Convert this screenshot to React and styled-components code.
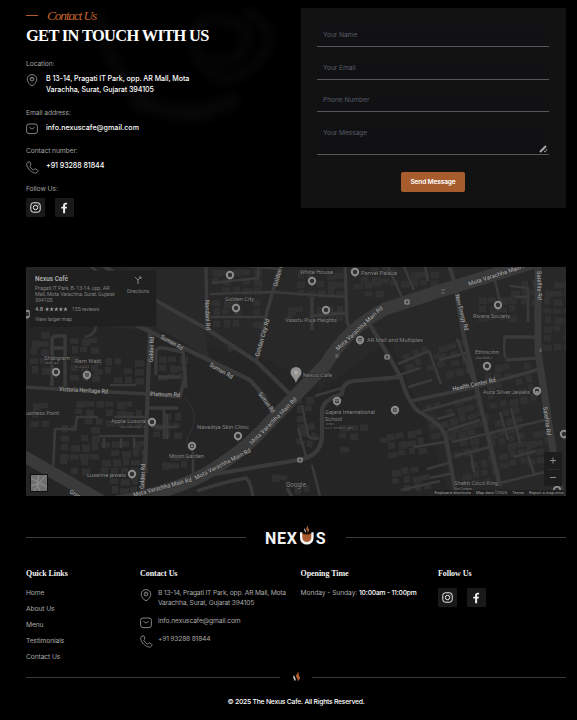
import React from "react";
import styled, { createGlobalStyle } from "styled-components";

const GlobalStyle = createGlobalStyle`
  * { box-sizing: border-box; }
  body { margin: 0; background: #000; overflow: hidden; }
  h1, h2, p, ul { margin: 0; padding: 0; font-weight: inherit; }
  ul { list-style: none; }
  a { color: inherit; text-decoration: none; }
`;

const Page = styled.div`
  position: relative;
  width: 577px;
  height: 720px;
  padding: 8px 11px 0 26px;
  overflow: hidden;
  background: #000;
  color: #fff;
  font-family: Inter, "Liberation Sans", sans-serif;
  font-size: 6.7px;
`;

const Smoke = styled.svg`
  position: absolute;
  left: 0;
  top: 0;
  width: 300px;
  height: 150px;
`;

const Hero = styled.section`
  position: relative;
  display: grid;
  grid-template-columns: 275px 265px;
  height: 259px;
`;

const Eyebrow = styled.div`
  display: flex;
  align-items: center;
  gap: 9px;
  height: 15px;
  color: #c0602a;
  font: italic 13.5px/15px "Liberation Serif", cursive;
  letter-spacing: -1.2px;

  &::before {
    content: "";
    width: 12px;
    height: 1px;
    background: #b9602a;
  }
`;

const Title = styled.h1`
  height: 24px;
  font: bold 16.4px/25px "Liberation Serif", serif;
  letter-spacing: -0.64px;
  white-space: nowrap;
`;

const Label = styled.p`
  height: 10px;
  margin-top: ${(p) => p.$top}px;
  color: #a2a2a2;
  line-height: 10px;
  letter-spacing: -0.08px;
`;

const Detail = styled.div`
  display: flex;
  gap: ${(p) => p.$gap}px;
  margin-top: ${(p) => p.$top}px;
  height: ${(p) => p.$height}px;
  line-height: ${(p) => p.$line}px;
  white-space: nowrap;

  svg { flex: none; margin-top: 1px; }
`;

const Strong = styled.span`
  font-size: 7.1px;
  font-weight: 500;
  letter-spacing: ${(p) => p.$track}px;
`;

const FooterText = styled.span`
  letter-spacing: ${(p) => p.$track}px;
`;

const Socials = styled.div`
  display: flex;
  gap: 10px;
  margin-top: ${(p) => p.$top}px;
`;

const SocialButton = styled.a`
  display: grid;
  place-items: center;
  width: 19px;
  height: 19px;
  border-radius: 1px;
  background: #191919;
`;

const Form = styled.form`
  display: flex;
  flex-direction: column;
  align-items: center;
  width: 265px;
  height: 200px;
  padding: 11px 17px 0 16px;
  background: #121212;
`;

const fieldFont = `
  display: block;
  width: 232px;
  margin: 0;
  border: 0;
  border-bottom: 1px solid #555759;
  outline: 0;
  background: #111113;
  color: #ddd;
  font: 6.7px/10px Inter, "Liberation Sans", sans-serif;
  letter-spacing: -0.08px;
  &::placeholder { color: #565c68; opacity: 1; }
`;

const Input = styled.input`
  ${fieldFont}
  height: 21px;
  padding: 0 6px 3px;
  margin-top: ${(p) => p.$top}px;
  flex: none;
`;

const MessageBox = styled.div`
  display: flex;
  align-items: flex-end;
  justify-content: flex-end;
  width: 232px;
  height: 32px;
  margin-top: 11px;
  border-bottom: 1px solid #555759;
  background: #111113;
`;

const TextArea = styled.textarea`
  ${fieldFont}
  flex: 1;
  height: 31px;
  padding: 5px 6px;
  border: 0;
  resize: none;
`;

const SendButton = styled.button`
  width: 64px;
  height: 20px;
  margin-top: 17px;
  padding: 0;
  border: 0;
  border-radius: 2px;
  background: #a65c2c;
  color: #fff;
  font: 600 6.7px/20px Inter, sans-serif;
  letter-spacing: -0.22px;
`;

const MapFrame = styled.section`
  position: relative;
  width: 540px;
  height: 229px;
  overflow: hidden;
  background: #252525;
  font-family: Roboto, sans-serif;
`;

const MapCanvas = styled.svg`
  display: block;
  width: 540px;
  height: 229px;
`;

const PlaceCard = styled.div`
  position: absolute;
  left: 4px;
  top: 4px;
  display: flex;
  justify-content: space-between;
  width: 126px;
  height: 55px;
  padding: 4px 7px 0 5px;
  background: #202020;
  box-shadow: 0 0 1px #111;
  color: #7f7f7f;
  font-size: 5.4px;
  line-height: 6.2px;
  letter-spacing: -0.12px;
  white-space: nowrap;
`;

const PlaceName = styled.div`
  margin-bottom: 2px;
  color: #a4a4a4;
  font-size: 6.4px;
  font-weight: 700;
  line-height: 8px;
  letter-spacing: 0;
`;

const Rating = styled.div`
  display: flex;
  align-items: center;
  gap: 2px;
  margin: 2.5px 0 4px;
  b { color: #9b9b9b; font-size: 5.8px; font-weight: 500; }
  span { margin-left: 2px; }
`;

const Directions = styled.div`
  display: flex;
  flex-direction: column;
  align-items: center;
  gap: 4px;
  padding-top: 1px;
  font-size: 5.2px;
`;

const ZoomControl = styled.div`
  position: absolute;
  right: 4px;
  bottom: 10px;
  width: 18px;
  height: 34px;
  background: #1d1d1d;
`;

const LayerThumb = styled.div`
  position: absolute;
  left: 4px;
  bottom: 4px;
  display: grid;
  width: 18px;
  height: 18px;
  border: 1px solid #111;
  background: #6f6f6f;
`;

const Attribution = styled.div`
  position: absolute;
  right: 2px;
  bottom: 0;
  display: flex;
  gap: 5px;
  height: 6px;
  color: #a0a0a0;
  font-size: 4.2px;
  line-height: 6px;
  white-space: nowrap;
  background: #202020;
`;

const Divider = styled.div`
  display: flex;
  align-items: center;
  justify-content: space-between;
  width: 540px;
  height: ${(p) => p.$height}px;
  margin-top: ${(p) => p.$top}px;

  &::before, &::after {
    content: "";
    width: ${(p) => p.$line}px;
    height: 1px;
    background: #3a3a3a;
  }
`;

const FooterGrid = styled.footer`
  display: grid;
  grid-template-columns: 114px 160.5px 137.5px 128px;
  height: 122px;
  padding-top: 17px;
  color: #a9a9a9;
  letter-spacing: -0.1px;
`;

const ColumnTitle = styled.h2`
  height: 12px;
  color: #f2f2f2;
  font: bold 8px/12px "Liberation Serif", serif;
  letter-spacing: -0.06px;
  white-space: nowrap;
`;

const LinkList = styled.ul`
  display: grid;
  grid-auto-rows: 16.1px;
  margin-top: 8px;
  line-height: 10px;
`;

const Hours = styled.p`
  margin-top: 8px;
  line-height: 10px;
  letter-spacing: -0.08px;
  white-space: nowrap;
  b { color: #fff; font-weight: 500; letter-spacing: -0.17px; }
`;

const Copyright = styled.p`
  margin-top: 13px;
  font-size: 6.8px;
  font-weight: 500;
  line-height: 10px;
  letter-spacing: -0.24px;
  text-align: center;
`;

const PinIcon = () => (
  <svg width="12" height="13" viewBox="0 0 12 13" fill="none" stroke="#929292" strokeWidth=".9">
    <path d="M4.6 11.1C2.6 9.1 1.2 7.2 1.2 5.2a4.8 4.6 0 0 1 9.6 0c0 2-1.4 3.9-3.4 5.9q-1.4 1.1-2.8 0Z" />
    <circle cx="6" cy="5" r="1.9" />
    <path d="M6 4v1.2" />
  </svg>
);

const MailIcon = () => (
  <svg width="12" height="12" viewBox="0 0 12 12" fill="none" stroke="#929292" strokeWidth=".9">
    <rect x=".6" y="1" width="10.8" height="9.6" rx="2.4" />
    <path d="M3.4 4.2 5.1 5.6q.9.6 1.8 0l1.7-1.4" />
  </svg>
);

const PhoneIcon = () => (
  <svg width="13" height="13" viewBox="0 0 13 13" fill="none" stroke="#929292" strokeWidth=".9" strokeLinejoin="round">
    <path d="M3.1.8 1.2 1.7C0 2.7.9 6.3 3.6 9s6.1 3.8 7.3 2.7l1-1.5c.2-.5 0-.9-.5-1.2L9.6 7.9c-.5-.2-.9-.1-1.2.4-.4.7-.8.8-1.4.5C5.9 8.1 4.8 7 4.1 5.9 3.7 5.2 3.9 4.900 4.500 4.500c.5-.3.5-.7.3-1.200L4.200 1.300C4 .8 3.600.6 3.100.8Z" />
  </svg>
);

const InstagramIcon = () => (
  <svg width="11" height="11" viewBox="0 0 11 11" fill="none" stroke="#eee" strokeWidth="1">
    <rect x=".8" y=".8" width="9.4" height="9.4" rx="2.5" />
    <circle cx="5.5" cy="5.5" r="2.2" />
    <circle cx="8.1" cy="2.9" r=".5" fill="#eee" stroke="none" />
  </svg>
);

const FacebookIcon = () => (
  <svg width="11" height="12" viewBox="0 0 11 12" fill="#eee">
    <path d="M4.1 11.3V6.6H2.3V4.700H4.100V3.500C4.100 1.600 5.100.7 6.700.7h1.400v1.800H7c-.7 0-.9.4-.9 1v1.200H8L7.700 6.600H6.100v4.700Z" />
  </svg>
);

const Flame = () => (
  <g>
    <path d="M4.900 0C5.800 2 2.700 3.100 3.400 5.300C3.800 6.600 5.200 7 4.700 9.600C6.900 7.900 7.500 6.200 6.300 4.600C5.100 3 6.300 1.500 4.900 0Z" fill="#b05e2e" />
    <path d="M1.500 4C-.5 5.800 1.800 7 2.100 9.400C4.200 7.500 1.700 6.200 1.500 4Z" fill="#ddd" />
  </g>
);

const LogoSvg = styled.svg`
  width: 62px;
  height: 26px;
  font: 700 16px Roboto, sans-serif;
`;

const Logo = () => (
  <LogoSvg viewBox="0 0 62 26" fill="#f4f4f4">
    <text x="0" y="18.500" textLength="32">NEX</text>
    <text x="50.700" y="18.500" textLength="10">S</text>
    <path d="M35 7.200V13a6.800 6.600 0 0 0 13.600 0V7.200Z" />
    <path d="M37.300 7V12.800a4.500 4.200 0 0 0 9 0V7Z" fill="#a95c2e" />
    <path d="M37.300 6.900H46.300V8.500Q41.800 10.500 37.300 8.500Z" fill="#1a0e07" />
    <g transform="translate(38.600 0) scale(.8)"><Flame /></g>
  </LogoSvg>
);

const SmallFlame = () => (
  <svg width="9" height="12" viewBox="0 0 9 12"><g transform="translate(.5 0) scale(1.080)"><Flame /></g></svg>
);

const WIDE_ROADS = [
  ["M100 505Q180 492 215 468Q245 450 267 425L326 364Q348 328 385 309L440 291L535 262", 13],
  ["M20 454L104 502", 12],
  ["M538 262V352L553 450L562 500", 7],
];

const ROADS = [
  ["M98 262L153 299L207 329L257 362L296 400", 5],
  ["M130 322L250 380L264 396L275 418", 5],
  ["M206 262L207 330", 4],
  ["M281 262L267 312L256 363", 4],
  ["M210 294L272 292L345 297M207 317H265M212 283L258 278V267M230 264L280 269", 3],
  ["M345 262L347 322L353 333M310 316L345 313M312 297V330", 4],
  ["M150 332L148 385L145 466L141 500", 5],
  ["M22 387L148 394L180 397L184 380", 4],
  ["M52 386V340Q52 336 57 336H65V387M53 348H66", 4],
  ["M156 375V352Q157 347 164 348L183 352L186 388M158 377H180M148 408H178", 4],
  ["M197 477L298 460Q323 456 322 432V410Q323 400 342 394Q342 382 354 381L400 377", 5],
  ["M302 405L308 435Q309 440 319 438M298 428L306 457M315 396L342 388", 3],
  ["M370 325L390 358L401 378Q408 402 418 411Q446 427 446 439L457 500", 5],
  ["M448 262L455 284L463 332L476 386L500 486", 5],
  ["M411 401L475 387L540 369M503 337H538M506 360L538 358", 4],
  ["M506 337Q503 339 505 358M457 339L474 382", 3],
  ["M388 267L402 297M402 262L414 290M424 262L428 281M495 281L500 302M510 286L528 288V322M515 297H530", 3],
  ["M398 364L429 351L441 384M439 360L469 352M385 380L420 368M408 387L432 380", 3],
  ["M423 411L478 396M437 419L455 414M448 430L480 420M452 442L545 420M455 456L490 447L492 445", 3],
  ["M500 412L508 440M511 408L520 443M514 457L536 451M528 456L535 476M471 454L474 472", 3],
  ["M413 447L446 442M427 469L452 462M430 478L453 473M401 490L440 481M500 483L545 472", 3],
  ["M53 470L55 429H75L77 417H98M99 436H145M121 438V448M134 438V448M114 417H145M104 438V448", 3],
  ["M164 408V439M152 427H177M167 414V439M193 452V475M312 465L320 496", 3],
  ["M197 491Q220 483 246 478Q250 480 253 496M287 488L292 497", 4],
  ["M85 337Q99 334 95 319M110 385H136M88 264L100 274", 3],
];

/* x, y, width, height, rotation of each built-up area */
const BLOCKS = [
  [30, 330, 20, 45, 0], [70, 337, 24, 42, 0], [94, 358, 49, 22, 0],
  [75, 400, 67, 27, 2], [31, 402, 20, 20, 0], [60, 425, 38, 30, 0],
  [101, 440, 41, 28, 0], [60, 458, 25, 18, 0], [110, 468, 28, 22, 0],
  [158, 355, 22, 22, 0], [153, 413, 24, 26, 0], [160, 452, 28, 15, 0],
  [212, 299, 46, 15, 0], [212, 320, 44, 8, 0], [212, 268, 48, 23, 0],
  [286, 306, 55, 12, 0], [296, 271, 43, 21, 0], [354, 281, 25, 17, -5],
  [350, 267, 35, 17, 0], [390, 270, 43, 10, 0], [478, 296, 42, 29, 0],
  [510, 280, 25, 25, 0], [543, 280, 22, 70, 0], [483, 363, 48, 18, -3],
  [404, 349, 32, 24, -20], [440, 341, 30, 34, -14], [486, 380, 46, 20, -12],
  [426, 399, 52, 30, -15], [449, 430, 30, 24, -12], [484, 410, 35, 28, -14],
  [488, 442, 38, 26, -10], [389, 430, 43, 58, -8], [461, 461, 34, 26, -10],
  [524, 430, 22, 30, -10], [295, 396, 20, 28, -6], [296, 430, 18, 25, 20],
  [339, 423, 22, 15, 0], [270, 473, 12, 8, 10], [293, 486, 16, 12, -8],
  [340, 445, 8, 9, 0], [380, 437, 8, 9, 0], [227, 345, 8, 9, -25],
];

function buildingsOf([x, y, w, h, angle], blockIndex) {
  const out = [];
  for (let row = 0; row * 9 < h; row += 1) {
    for (let col = 0; col * 10 < w; col += 1) {
      const n = (blockIndex * 17 + row * 13 + col * 7 + row * col * 5) % 11;
      if (n !== 0 && n !== 5) {
        out.push(
          <rect
            key={`${row}-${col}`}
            x={x + col * 10 + (n % 3)}
            y={y + row * 9 + (n % 4) * 0.7}
            width={6 + (n % 4)}
            height={5.5 + (n % 3)}
          />
        );
      }
    }
  }
  return <g key={blockIndex} transform={`rotate(${angle} ${x + w / 2} ${y + h / 2})`}>{out}</g>;
}

/* text, x, y, rendered length, font size */
const PLACES = [
  ["Shaligram", 44, 360, 26], ["સાલીગ્રામ", 45, 364, 14, 3],
  ["Ram Wadi", 75, 363, 26], ["રામ વાડી", 75, 368, 14, 3],
  ["usiness Point", 26, 415, 33], ["Apple Luxuria", 111, 423, 35], ["એપલ લક્ઝુરિયા", 120, 428, 27, 3],
  ["Navadiya Skin Clinic", 197, 429, 52], ["Moon Garden", 169, 458, 35],
  ["Luxeline jewels", 87, 477, 39], ["Golden City", 225, 301, 29],
  ["White House", 300, 274, 33], ["Panvel Palace", 361, 275, 36],
  ["Vaastu Puja Heights", 285, 322, 52], ["Nexus Cafe", 303, 377, 29],
  ["AR Mall and Multiplex", 367, 342, 56], ["Rivera Society", 473, 318, 37],
  ["Ethnicinn", 475, 354, 24], ["એથનીસીન", 475, 359, 17, 3],
  ["Aura Silver Jewels", 483, 394, 47], ["Gajera International", 325, 414, 50],
  ["School", 325, 420.5, 17], ["ગજેરા", 325, 425, 10, 3], ["ઇન્ટરનેશનલ સ્કૂલ", 325, 429, 28, 3],
  ["Shakti Coco King", 454, 485, 44], ["Ice Cream...", 454, 490, 21, 4],
  ["Google", 286, 487, 20, 6.5],
];

/* text, x, y, rendered length, rotation */
const STREETS = [
  ["Suman Rd", 160, 338, 25, 30], ["Suman Rd", 209, 366, 26, 30], ["Suman Rd", 258, 394, 24, 54],
  ["Mota Varachha Main Rd", 134, 497, 60, -15], ["Mota Varachha Main Rd", 196, 480, 62, -27],
  ["Mota Varachha Main Rd", 252, 445, 64, -45], ["Mota Varachha Main Rd", 338, 351, 62, -43],
  ["Mota Varachha Main Rd", 469, 286, 64, -18],
  ["Nandani Rd", 205, 300, 30, 88], ["Golden City Rd", 259, 357, 39, -74], ["Golden Rd", 277, 287, 26, -74],
  ["Golden Rd", 153, 362, 25, -88], ["Golden Rd", 144, 489, 25, -87],
  ["Victoria Heritage Rd", 59, 391, 49, 3], ["Platinum Rd", 150, 396, 30, 2],
  ["New Energy Rd", 455, 295, 37, 75], ["Satellite Rd", 537, 271, 29, 89],
  ["Satellite Rd", 543, 407, 29, 82], ["Health Center Rd", 453, 391, 44, -12], ["Grand Rd", 69, 493, 22, 29],
];

const MARKERS = [
  [56, 372], [87, 375], [152, 422], [192, 446], [132, 474], [230, 275], [236, 308], [312, 281],
  [355, 272], [326, 310], [360, 340], [498, 305], [487, 366], [537, 391], [238, 436],
  [337, 401], [395, 410], [564, 434], [27, 314], [557, 490],
];

const STOPS = [[407, 302], [387, 357], [300, 460]];

/* small pictograms over the temple, garden, shop, school and restaurant markers */
const GLYPHS = "M86 377V374.5L87 373.500L88 374.500V377M190.500 446H193.500M192 444.500V447.500M358.800 339.500H361.200V341.500H358.800ZM335.500 400.500L337 399.800L338.500 400.500L337 401.500ZM394.300 408.500V411.500M396 408.500V411.500M535.800 391.500H538.200V392.500H535.800Z";

function CafeMap() {
  return (
    <MapCanvas viewBox="26 267 540 229">
      <path d="M120 267H566V496H450L420 410L390 340L320 390L270 360L150 330Z" fill="#282828" />
      <path d="M104 327L150 323L209 358L204 330L153 300V330Z" fill="#2c2c2c" />
      <g fill="#303030">{BLOCKS.map(buildingsOf)}</g>
      <g fill="none" stroke="#3a3a3a" strokeLinejoin="round">
        {ROADS.map(([d, w]) => <path key={d} d={d} strokeWidth={w * 0.85} />)}
        {WIDE_ROADS.map(([d, w]) => <path key={d} d={d} strokeWidth={w} />)}
      </g>
      <path d="M185 397Q200 415 191 431Q182 446 194 450" fill="none" stroke="#444" strokeWidth=".8" strokeDasharray="2 1" />
      <g fill="#868686" fontSize="6.2" stroke="#222" strokeWidth=".8" paintOrder="stroke">
        {PLACES.map(([t, x, y, len, size]) => (
          <text key={t} x={x} y={y} textLength={len} lengthAdjust="spacingAndGlyphs" fontSize={size}>{t}</text>
        ))}
      </g>
      <g fill="#a0a0a0" fontSize="6.2" fontWeight="500" stroke="#2a2a2a" strokeWidth=".8" paintOrder="stroke">
        {STREETS.map(([t, x, y, len, a]) => (
          <text key={`${t}${x}`} textLength={len} lengthAdjust="spacingAndGlyphs" transform={`translate(${x} ${y}) rotate(${a})`}>{t}</text>
        ))}
      </g>
      {MARKERS.map(([x, y]) => (
        <g key={`${x}-${y}`}>
          <path d={`M${x - 2} ${y + 3}L${x} ${y + 6}L${x + 2} ${y + 3}`} fill="#4b4b4b" />
          <circle cx={x} cy={y} r="3.2" fill="#303030" stroke="#8c8c8c" strokeWidth="2" />
        </g>
      ))}
      <path d={GLYPHS} fill="none" stroke="#a0a0a0" strokeWidth=".8" />
      {STOPS.map(([x, y]) => (
        <rect key={x} x={x - 2} y={y - 2} width="4" height="4" rx=".8" fill="#444" stroke="#969696" strokeWidth="1.2" />
      ))}
      <path d="M336 356L339 354M336 354V357H339M441 290H445M441 293H445M541 348V352M539 350L541 352" fill="none" stroke="#777" strokeWidth=".8" />
      <path d="M296 383C294 377 290.5 376 290.5 372.5A5.5 5.500 0 0 1 301.500 372.500C301.500 376 298 377 296 383Z" fill="#929292" />
      <circle cx="296" cy="372.5" r="1.9" fill="#adadad" />
    </MapCanvas>
  );
}

const Address = () => <>B 13-14, Pragati IT Park, opp. AR Mall, Mota<br />Varachha, Surat, Gujarat 394105</>;

const HeroContact = () => (
  <>
    <Label $top={12}>Location:</Label>
    <Detail $gap={8} $top={4} $height={24} $line={11}><PinIcon /><Strong $track={-0.06}><Address /></Strong></Detail>
    <Label $top={11}>Email address:</Label>
    <Detail $gap={8} $top={4} $height={14} $line={11}><MailIcon /><Strong $track={0.03}>info.nexuscafe@gmail.com</Strong></Detail>
    <Label $top={10}>Contact number:</Label>
    <Detail $gap={7} $top={4} $height={14} $line={11}><PhoneIcon /><Strong $track={-0.07}>+91 93288 81844</Strong></Detail>
    <Label $top={10}>Follow Us:</Label>
  </>
);

const FooterContact = () => (
  <>
    <Detail $gap={6} $top={8} $height={27} $line={10}><PinIcon /><FooterText $track={-0.2}><Address /></FooterText></Detail>
    <Detail $gap={6} $top={1} $height={17} $line={10}><MailIcon /><FooterText $track={-0.12}>info.nexuscafe@gmail.com</FooterText></Detail>
    <Detail $gap={5} $top={1} $height={16} $line={10}><PhoneIcon /><FooterText $track={-0.2}>+91 93288 81844</FooterText></Detail>
  </>
);

const SocialLinks = ({ top }) => (
  <Socials $top={top}>
    <SocialButton href="#" aria-label="Instagram"><InstagramIcon /></SocialButton>
    <SocialButton href="#" aria-label="Facebook"><FacebookIcon /></SocialButton>
  </Socials>
);

export default function App() {
  return (
    <>
      <GlobalStyle />
      <Page>
        <Smoke viewBox="0 0 300 150" fill="none" stroke="#fff">
          <defs><filter id="haze" x="-30%" y="-30%" width="160%" height="160%"><feGaussianBlur stdDeviation="5" /></filter></defs>
          <g filter="url(#haze)" opacity=".026">
            <path d="M98 10Q108 80 155 105T220 102" strokeWidth="10" />
            <path d="M210 55Q230 72 244 48T220 20T198 58Q220 95 254 65T245 10" strokeWidth="9" />
            <path d="M130 100Q190 125 238 98" strokeWidth="14" />
          </g>
        </Smoke>
        <Hero>
          <div>
            <Eyebrow>Contact Us</Eyebrow>
            <Title>GET IN TOUCH WITH US</Title>
            <HeroContact />
            <SocialLinks top={4} />
          </div>
          <Form>
            <Input $top={7} placeholder="Your Name" />
            <Input $top={12} placeholder="Your Email" />
            <Input $top={11} placeholder="Phone Number" />
            <MessageBox>
              <TextArea placeholder="Your Message" />
              <svg width="10" height="10" viewBox="0 0 10 10"><path d="M1 8L7 2" stroke="#aaa" strokeWidth="2" /><path d="M5.5 8L8 5.5" stroke="#aaa" strokeWidth="1.5" strokeDasharray="1.5 1" /></svg>
            </MessageBox>
            <SendButton type="button">Send Message</SendButton>
          </Form>
        </Hero>
        <MapFrame>
          <CafeMap />
          <PlaceCard>
            <div>
              <PlaceName>Nexus Café</PlaceName>
              Pragati IT Park, B- 13-14, opp. AR<br />Mall, Mota Varachha, Surat, Gujarat<br />394105
              <Rating><b>4.8</b>
                <svg width="23" height="5" viewBox="0 0 23 5" fill="#999">
                  {[0, 4.6, 9.2, 13.8, 18.4].map((x) => <path key={x} transform={`translate(${x} 0)`} d="M2.1 0L2.7 1.5H4.2L3 2.6L3.5 4.2L2.1 3.3L.7 4.2L1.2 2.6L0 1.5H1.5Z" />)}
                </svg>
                <span>155 reviews</span>
              </Rating>
              View larger map
            </div>
            <Directions>
              <svg width="8" height="8" viewBox="0 0 8 8" fill="none" stroke="#858585"><path d="M4 8V4L1 1M4 4L7 1M5 1H7V3" /></svg>
              Directions
            </Directions>
          </PlaceCard>
          <LayerThumb><svg width="16" height="16" fill="none" stroke="#949494"><path d="M0 3L16 12M3 16L9 7L15 0M0 11L6 9L9 16M8 0L6 9" /></svg></LayerThumb>
          <ZoomControl><svg width="18" height="34" stroke="#8b8b8b" fill="none"><path d="M6 8.5H12M9 5.5V11.5M6 25.5H12" /><path d="M3 17.5H15" stroke="#2c2c2c" /></svg></ZoomControl>
          <Attribution><span>Keyboard shortcuts</span><span>Map data ©2025</span><span>Terms</span><span>Report a map error</span></Attribution>
        </MapFrame>
        <Divider $top={28} $height={27} $line={220}><Logo /></Divider>
        <FooterGrid>
          <nav>
            <ColumnTitle>Quick Links</ColumnTitle>
            <LinkList>{["Home", "About Us", "Menu", "Testimonials", "Contact Us"].map((item) => <li key={item}><a href="#">{item}</a></li>)}</LinkList>
          </nav>
          <section><ColumnTitle>Contact Us</ColumnTitle><FooterContact /></section>
          <section><ColumnTitle>Opening Time</ColumnTitle><Hours>Monday - Sunday: <b>10:00am - 11:00pm</b></Hours></section>
          <section><ColumnTitle>Follow Us</ColumnTitle><SocialLinks top={8} /></section>
        </FooterGrid>
        <Divider $top={-3} $height={14} $line={254}><SmallFlame /></Divider>
        <Copyright>© 2025 The Nexus Cafe. All Rights Reserved.</Copyright>
      </Page>
    </>
  );
}
